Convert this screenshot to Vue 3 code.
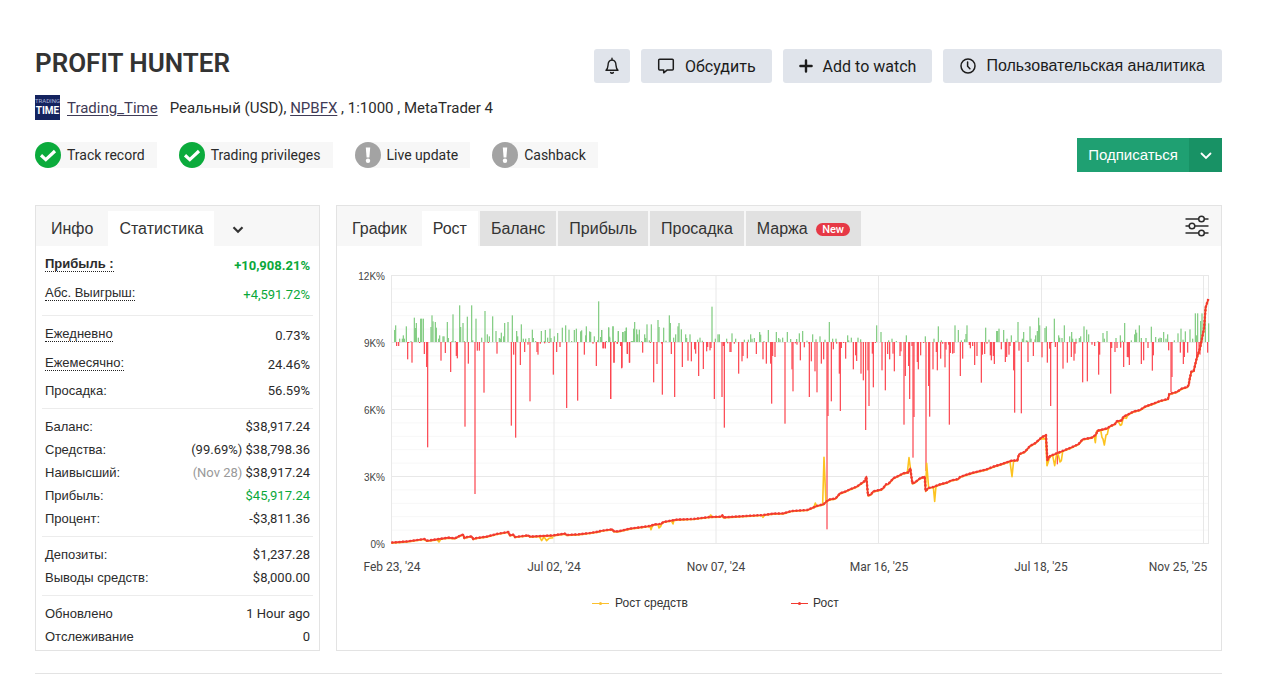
<template>
  <main class="page">
    <header class="top">
      <h1>PROFIT HUNTER</h1>
      <div class="actions">
        <button class="action square" aria-label="Notifications">
          <svg width="16" height="18" viewBox="0 0 16 18" fill="none" stroke="#1c1c1c" stroke-width="1.4" stroke-linejoin="round">
            <path d="M2 13.2h12c-1.4-1.3-1.9-2.800-2-4.800C11.900 5 10.600 3.100 8 3.100S4.100 5 4 8.400c-.1 2-.6 3.500-2 4.800z" />
            <path d="M8 3V1.300M6.600 15.500c.6.900 2.200.9 2.800 0" stroke-linecap="round" />
          </svg>
        </button>
        <button class="action">
          <svg width="18" height="18" viewBox="0 0 18 18" fill="none" stroke="#1c1c1c" stroke-width="1.5" stroke-linejoin="round">
            <path d="M2.700 2.300h12.600a1 1 0 0 1 1 1v8.800a1 1 0 0 1-1 1H10l-3.300 2.700v-2.700h-4a1 1 0 0 1-1-1V3.300a1 1 0 0 1 1-1z" />
          </svg>
          Обсудить
        </button>
        <button class="action">
          <svg width="14" height="14" viewBox="0 0 14 14" stroke="#1c1c1c" stroke-width="2.400" stroke-linecap="round">
            <path d="M7 1.400v11.200M1.400 7h11.200" />
          </svg>
          Add to watch
        </button>
        <button class="action arial">
          <svg width="16" height="16" viewBox="0 0 16 16" fill="none" stroke="#1c1c1c" stroke-width="1.500" stroke-linecap="round">
            <circle cx="8" cy="8" r="7" />
            <path d="M7.600 4v4.300l2.300 2.500" />
          </svg>
          Пользовательская аналитика
        </button>
      </div>
    </header>

    <div class="account">
      <svg class="avatar" width="25" height="25" viewBox="0 0 25 25">
        <rect width="25" height="25" fill="#14235f" />
        <text x="12.500" y="8" font-size="6" fill="#aab2d6" text-anchor="middle">TRADING</text>
        <text x="12.500" y="18.500" font-size="10" font-weight="700" fill="#fff" text-anchor="middle">TIME</text>
      </svg>
      <a href="#">Trading_Time</a>
      <span class="details">Реальный (USD), <a href="#">NPBFX</a> , 1:1000 , MetaTrader 4</span>
    </div>

    <div class="status">
      <div class="badges">
        <span v-for="badge in badges" :key="badge.text" class="badge">
          <svg width="26" height="26" viewBox="0 0 26 26">
            <circle cx="13" cy="13" r="13" :fill="badge.ok ? '#0bab3c' : '#a3a3a3'" />
            <path v-if="badge.ok" d="M6 13.300l4.800 4.300L20 9" fill="none" stroke="#fff" stroke-width="3.200" />
            <template v-else>
              <path d="M10.800 5.600h4.400l-.8 10h-2.800z" fill="#fff" />
              <circle cx="13" cy="18.800" r="2.200" fill="#fff" />
            </template>
          </svg>
          {{ badge.text }}
        </span>
      </div>
      <div class="subscribe">
        <button class="subscribe-main">Подписаться</button>
        <button class="subscribe-more" aria-label="More">
          <svg width="12" height="8" viewBox="0 0 12 8" fill="none" stroke="#fff" stroke-width="1.800" stroke-linecap="round">
            <path d="M1.500 1.500L6 6l4.500-4.500" />
          </svg>
        </button>
      </div>
    </div>

    <div class="panels">
      <section class="panel stats">
        <nav class="tabs">
          <button class="tab">Инфо</button>
          <button class="tab active">Статистика</button>
          <button class="tab more" aria-label="More">
            <svg width="12" height="8" viewBox="0 0 12 8" fill="none" stroke="#333" stroke-width="2.200">
              <path d="M1.500 1.300L6 5.700l4.500-4.400" />
            </svg>
          </button>
        </nav>
        <dl v-for="(group, i) in stats" :key="i" class="group" :class="{ hints: group[0].hint }">
          <div v-for="row in group" :key="row.label" class="row" :class="{ hint: row.hint, bold: row.bold }">
            <dt><span>{{ row.label }}</span></dt>
            <dd :class="{ green: row.green }">
              <span v-if="row.note" :class="{ muted: row.muted }">{{ row.note }}</span>
              {{ row.value }}
            </dd>
          </div>
        </dl>
      </section>

      <section class="panel growth">
        <nav class="tabs">
          <button class="tab">График</button>
          <button
            v-for="tab in chartTabs"
            :key="tab"
            class="tab"
            :class="tab === activeTab ? 'active' : 'grey'"
            @click="activeTab = tab"
          >
            {{ tab }}
            <span v-if="tab === 'Маржа'" class="new">New</span>
          </button>
          <button class="settings" aria-label="Settings">
            <svg width="24" height="22" viewBox="0 0 24 22" stroke="#2b2b2b" stroke-width="1.500" fill="#f7f7f7">
              <path d="M.5 4h23M.5 11h23M.5 18h23" />
              <circle cx="16.500" cy="4" r="2.800" />
              <circle cx="7" cy="11" r="2.800" />
              <circle cx="16.500" cy="18" r="2.800" />
            </svg>
          </button>
        </nav>

        <svg class="chart" viewBox="337 246 884 404">
          <line v-for="y in minorLines" :key="'m' + y" x1="391" x2="1209" :y1="y" :y2="y" stroke="#f7f7f7" />
          <line v-for="t in yTicks" :key="t.text" x1="391" x2="1209" :y1="t.y" :y2="t.y" stroke="#e8e8e8" />
          <line v-for="x in xLines" :key="'x' + x" :x1="x" :x2="x" y1="275" y2="544" stroke="#e8e8e8" />

          <rect v-for="(b, i) in greenBars" :key="'g' + i" :x="b.x" :y="342 - b.h" width="1.200" :height="b.h" fill="#7fcb7f" />
          <rect v-for="(b, i) in redBars" :key="'r' + i" :x="b.x" y="342" width="1.200" :height="b.h" fill="#fc444e" />

          <g fill="none" stroke-linejoin="round">
            <polyline :points="growth" stroke="#fbc02d" stroke-width="1.500" transform="translate(0 .6)" />
            <polyline v-for="(s, i) in spikes" :key="'s' + i" :points="s" stroke="#fcc320" stroke-width="1.600" />
            <polyline :points="growth" stroke="#f23a30" stroke-width="1.700" />
            <polyline :points="growth" stroke="#f23a30" stroke-width="2.400" stroke-dasharray="1.800 1.800" />
          </g>

          <g class="y-labels">
            <text v-for="t in yTicks" :key="t.text" x="385" :y="t.y + 4">{{ t.text }}</text>
          </g>
          <g class="x-labels">
            <text v-for="t in xTicks" :key="t.text" :x="t.x" y="571">{{ t.text }}</text>
          </g>
          <g class="legend">
            <path d="M592 603.500h17" stroke="#fbc02d" />
            <circle cx="600.500" cy="603.500" r="1.500" fill="#fbc02d" />
            <text x="615" y="607">Рост средств</text>
            <path d="M791 603.500h17" stroke="#f23a30" />
            <circle cx="799.500" cy="603.500" r="1.500" fill="#f23a30" />
            <text x="813" y="607">Рост</text>
          </g>
        </svg>
      </section>
    </div>
    <hr />
  </main>
</template>

<script setup>
import { ref } from 'vue'

const badges = [
  { text: 'Track record', ok: true },
  { text: 'Trading privileges', ok: true },
  { text: 'Live update', ok: false },
  { text: 'Cashback', ok: false },
]

const stats = [
  [
    { label: 'Прибыль :', value: '+10,908.21%', hint: true, bold: true, green: true },
    { label: 'Абс. Выигрыш:', value: '+4,591.72%', hint: true, green: true },
  ],
  [
    { label: 'Ежедневно', value: '0.73%', hint: true },
    { label: 'Ежемесячно:', value: '24.46%', hint: true },
    { label: 'Просадка:', value: '56.59%' },
  ],
  [
    { label: 'Баланс:', value: '$38,917.24' },
    { label: 'Средства:', value: '$38,798.36', note: '(99.69%)' },
    { label: 'Наивысший:', value: '$38,917.24', note: '(Nov 28)', muted: true },
    { label: 'Прибыль:', value: '$45,917.24', green: true },
    { label: 'Процент:', value: '-$3,811.36' },
  ],
  [
    { label: 'Депозиты:', value: '$1,237.28' },
    { label: 'Выводы средств:', value: '$8,000.00' },
  ],
  [
    { label: 'Обновлено', value: '1 Hour ago' },
    { label: 'Отслеживание', value: '0' },
  ],
]

const chartTabs = ['Рост', 'Баланс', 'Прибыль', 'Просадка', 'Маржа']
const activeTab = ref('Рост')

const yTicks = [
  { text: '12K%', y: 275.5 },
  { text: '9K%', y: 342.5 },
  { text: '6K%', y: 409.5 },
  { text: '3K%', y: 476.5 },
  { text: '0%', y: 543.5 },
]
const minorLines = Array.from({ length: 20 }, (_, i) => 275.5 + i * 13.4)
const xLines = [391.5, 554, 716, 878.5, 1041.5, 1203.5, 1208.5]
const xTicks = [
  { text: "Feb 23, '24", x: 392 },
  { text: "Jul 02, '24", x: 554 },
  { text: "Nov 07, '24", x: 716 },
  { text: "Mar 16, '25", x: 879 },
  { text: "Jul 18, '25", x: 1041 },
  { text: "Nov 25, '25", x: 1178 },
]

// data is stored in thirds of a chart unit, each block relative to its left edge
const STEP = 3

const bars = (blocks) =>
  blocks.flatMap(([left, list]) =>
    list.split(' ').map((item) => {
      const [x, h] = item.split(':').map(Number)
      return { x: left + x / STEP - 0.6, h: h / STEP }
    }),
  )

const greenBars = bars([
  [330, '194:36 197:50 209:10 217:10 220:20 223:10 229:47 243:3 253:73 256:42 259:57 265:13 272:70 275:70 280:70 303:45 306:80 309:62 316:60 319:43 326:10 329:20 339:17 342:17 352:60 355:12 366:3 369:83 376:3 389:110 392:45 399:57 403:3 412:76 425:110 428:5 438:70 455:13 465:93 472:23 478:17 488:77 498:33 508:12 511:10 514:28 521:17 524:57 534:60 547:80 560:33 563:17 574:53 580:10 587:10 597:12 607:37 610:12 617:3 634:33 643:3 646:36 653:13 660:40 663:12 673:17 683:27 697:43 707:50 717:37 725:3 733:36 739:40 752:32 755:35 767:20 769:47 779:32 782:30 793:17 803:5 806:122 815:36 829:3 836:44 839:12 849:47 856:3 865:32 879:30 886:32 889:43'],
  [600, '2:15 5:36 19:3 26:43 29:16 39:47 46:3 55:33 68:30 75:33 79:43 94:3 98:3 101:40 104:60 110:38 113:23 118:37 125:3 134:23 137:12 141:53 148:5 154:53 174:66 177:45 191:43 198:4 208:80 211:57 221:13 227:23 234:47 237:57 244:38 257:23 260:12 270:23 293:7 300:13 307:4 336:106 346:10 354:23 358:23 380:10 396:26 407:10 433:7 445:7 452:23 456:10 463:12 479:30 482:22 492:3 505:36 529:30 536:12 540:8 548:13 562:30 572:9 590:9 598:26 608:33 621:4 638:23 648:8 660:17 675:7 688:60 698:10 708:10 743:20 746:5 754:13 774:13 782:8 830:50 843:30 866:5 876:10 889:3'],
  [800, '319:20 376:17 402:10 415:47 424:5 465:50 475:36 484:5 494:8 498:24 501:50 557:43 567:7 590:33 593:33 597:40'],
  [1000, '11:36 21:10 34:20 48:4 54:60 67:10 71:30 79:5 83:4 90:47 93:10 105:8 107:20 112:33 116:73 119:50 135:42 139:47 163:70 176:20 179:13 186:12 193:50 209:17 215:30 218:10 228:10 238:12 242:17 252:47 260:37 266:23 294:3 309:27 313:10 321:33 348:12 361:20 367:4 374:57 394:5 404:23 407:37 410:28 418:50 424:12 438:12 454:46 467:15 476:10 480:13 484:12 491:30 498:10 503:23 523:5 534:26 543:40 549:7 556:32 570:38 578:10 586:86 589:20 593:86 602:63 606:86 616:105 626:56'],
])

const redBars = bars([
  [330, '200:12 206:12 233:52 236:3 246:62 269:3 283:36 290:75 293:316 333:56 346:33 362:90 379:42 382:49 405:254 415:65 435:456 442:26 448:26 462:152 475:3 501:35 544:251 551:38 557:287 571:69 584:30 594:8 600:178 621:30 624:38 631:5 644:4 657:3 670:98 680:30 690:15 710:198 743:176 763:38 789:5 799:72 819:19 826:19 842:171 852:62 862:5 873:12 876:77 892:35 899:62'],
  [600, '10:19 16:19 32:171 42:62 52:5 62:12 65:79 82:36 88:62 128:32 151:3 161:121 171:66 187:158 185:5 214:36 224:165 247:75 264:56 274:58 284:22 287:35 296:102 310:81 320:28 323:15 330:25 333:18 343:171 366:165 370:12 373:257 383:4 390:30 393:30 403:5 416:95 426:58 429:42 442:49 469:36 489:52 499:65 512:65 515:185 518:42 525:45 555:245 576:82 579:148 586:4 591:8 601:55 613:16 627:5 628:165 634:58 645:88 651:151 664:65 671:52 681:562 684:222 694:178 700:22 710:5 718:95 721:207 724:18 731:3'],
  [800, '137:50 160:82 167:40 170:57 183:95 190:115 197:264 204:85 207:192 217:35 220:136 226:3 246:85 256:145 263:36 269:52 279:35 283:88 300:42 303:28 312:248 316:102 326:72 329:171 336:12 339:347 342:225 352:60 355:82 362:40 371:3 378:387 386:132 389:224 399:82 409:30 412:85 422:50 428:5 435:76 438:23 446:8 448:248 451:33 458:35 462:33 481:102 488:50 508:9 511:19 518:12 524:69 531:42 544:122 547:38 554:36 561:5 571:40 574:55 580:42 583:66'],
  [1000, '4:22 16:60 20:45 27:38 30:12 41:85 44:212 57:26 64:214 84:60 100:42 126:46 142:62 149:20 152:192 155:3 166:15 172:367 189:80 202:62 214:45 222:56 225:35 228:5 248:121 262:118 276:8 284:12 296:98 299:38 332:155 335:18 345:30 351:18 362:17 371:75 382:45 385:46 388:69 424:66 431:55 444:18 457:86 460:40 506:25 513:150 516:105 541:32 550:66 553:45 563:32 590:42 597:35 600:38 623:32'],
])

const line = (left, top, list) =>
  list
    .split(' ')
    .map((item) => {
      const [x, y] = item.split(',').map(Number)
      return `${left + x / STEP},${top + y / STEP}`
    })
    .join(' ')

const growth = [
  line(380, 290, '34,758 83,754 133,747 140,752 150,751 170,748 205,743 225,745 240,737 250,734 253,744 262,741 275,739 280,747 290,744 320,740 350,732 385,726 390,736 400,734 405,741 430,738 445,736 450,740 520,736 555,731 560,735 595,733 630,729 660,724'),
  line(600, 290, '0,723 20,720 37,718 42,724 55,724 90,716 150,708 165,703 183,702 190,696 230,689 280,687 330,681 362,680 367,676 370,682 490,675 520,671 550,670 575,663 622,660 650,648 670,643 680,634 690,628 705,626'),
  line(800, 290, '108,624 120,610 135,605 150,598 170,590 190,576 195,572 199,560 204,616 212,614 220,604 243,599 250,594 258,583 265,582 280,565 295,558 310,550 325,547 331,535 337,580 345,577 360,565 374,560 377,603 385,594 400,591 420,583 440,578 455,571 475,567 480,561 500,554 520,548 560,538'),
  line(1000, 200, '-20,800 0,794 35,782 52,781 57,763 75,755 90,738 105,730 125,712 138,705 142,780 150,768 175,758 190,752 215,742 235,733 248,718 275,713 287,705 293,692 322,685 330,679 345,672 350,664 365,661 370,650 385,643 400,635 420,630 435,620 460,611 480,603 504,597 508,582 530,576 545,566 562,561 566,555 569,537 574,515 581,513 590,475 600,445 606,415 612,385 617,322 625,297'),
].join(' ')

const spikes = [
  line(380, 290, '172,750 177,756 182,748'),
  line(380, 290, '478,740 485,752 492,741 500,752 507,745 520,743'),
  line(600, 290, '150,708 153,719 158,706'),
  line(600, 290, '174,704 177,714 182,709 185,702'),
  line(600, 290, '215,694 219,702 222,690'),
  line(600, 290, '328,682 332,675 336,681'),
  line(600, 290, '486,676 489,682 492,677'),
  line(600, 290, '642,650 646,639 650,648'),
  line(600, 290, '668,643 672,502 678,640'),
  line(800, 290, '322,548 327,503 332,540'),
  line(800, 290, '377,590 380,520 386,594'),
  line(800, 290, '400,591 404,634 408,588'),
  line(1000, 200, '30,785 36,830 41,782'),
  line(1000, 200, '120,717 137,716 141,797 150,770 158,767 164,797 170,762 175,765 180,786 184,782 188,755'),
  line(1000, 200, '283,710 286,728 290,693 302,690 306,712 309,717 313,735 318,705 322,703 326,683'),
  line(1000, 200, '355,665 361,676 365,674 370,653 379,655 384,645'),
]
</script>

<style>
body {
  margin: 0;
  background: #fff;
}
</style>

<style scoped>
.page {
  padding: 48px 58px 0 35px;
  font-family: Roboto, 'Liberation Sans', sans-serif;
  font-size: 16px;
  color: #2b2b2b;
}

button {
  border: none;
  border-radius: 0;
  background: none;
  margin: 0;
  padding: 0;
  font: inherit;
  color: inherit;
  white-space: nowrap;
  cursor: pointer;
}

a {
  color: #3f3b56;
  text-underline-offset: 2px;
}

.top {
  display: flex;
  justify-content: space-between;
  align-items: center;
  height: 36px;
}

h1 {
  margin: 0;
  padding-bottom: 6px;
  font-size: 26px;
  line-height: 30px;
  font-weight: 600;
  color: #333;
}

.actions {
  display: flex;
  gap: 11px;
}

.action {
  display: flex;
  align-items: center;
  gap: 10px;
  height: 34px;
  padding: 0 16px;
  border-radius: 3px;
  background: #e0e4eb;
  color: #1c1c1c;
}

.square {
  padding: 0 10px;
}

.arial {
  padding: 0 17px;
  font-family: 'Liberation Sans', Arial, sans-serif;
}

.account {
  display: flex;
  align-items: center;
  margin-top: 11px;
  height: 25px;
  font-size: 15px;
}

.avatar {
  margin: 0 7px 0 0;
}

.avatar text {
  font-family: Roboto, sans-serif;
}

.details {
  margin-left: 12px;
}

.status {
  display: flex;
  justify-content: space-between;
  align-items: center;
  margin-top: 17px;
  height: 35px;
}

.badges {
  display: flex;
  gap: 22px;
}

.badge {
  display: flex;
  align-items: center;
  gap: 6px;
  height: 26px;
  padding-right: 12px;
  border-radius: 13px 0 0 13px;
  background: #f7f7f7;
  font-size: 14px;
}

.subscribe {
  display: flex;
  height: 34px;
  font-family: 'Liberation Sans', Arial, sans-serif;
  font-size: 15px;
  color: #fff;
}

.subscribe-main {
  padding: 0 11px;
  background: #1fa072;
}

.subscribe-more {
  width: 33px;
  background: #189265;
}

.panels {
  display: grid;
  grid-template-columns: 285px minmax(0, 1fr);
  gap: 16px;
  margin-top: 33px;
}

.panel {
  border: 1px solid #e3e3e3;
  font-family: 'Liberation Sans', Arial, sans-serif;
}

.tabs {
  display: flex;
  align-items: flex-end;
  height: 40px;
  background: #f7f7f7;
}

.tab {
  height: 35px;
  padding: 0 11px;
  color: #333;
}

.stats .tab:first-child,
.growth .tab:first-child {
  padding: 0 15px;
}

.tab.active {
  background: #fff;
}

.tab.more {
  padding: 0 18px;
}

.growth .grey {
  margin-left: 2px;
  background: #e1e1e1;
}

.new {
  display: inline-block;
  margin-left: 4px;
  padding: 0 6px;
  border-radius: 7px;
  background: #e63946;
  color: #fff;
  font-family: Roboto, sans-serif;
  font-size: 11px;
  line-height: 13px;
  font-weight: 500;
  vertical-align: 1px;
}

.settings {
  align-self: center;
  margin-left: auto;
  margin-right: 12px;
  height: 22px;
}

.settings svg {
  display: block;
}

.group {
  margin: 0 6px;
  padding: 6px 3px;
  border-bottom: 1px solid #ececec;
  font-size: 13px;
}

.group.hints {
  padding-top: 5px;
}

.group:last-child {
  padding-bottom: 0;
  border-bottom: none;
}

.row {
  display: flex;
  justify-content: space-between;
  align-items: center;
  height: 23px;
}

.row.hint {
  height: 29px;
}

.row.hint dt {
  padding-bottom: 5px;
}

.row.hint dt span {
  border-bottom: 1px dotted #222;
}

.row.bold {
  font-weight: 700;
}

dd {
  margin: 0;
  font-family: Roboto, sans-serif;
}

.green {
  color: #0aa83a;
}

.muted {
  color: #999;
}

.chart {
  display: block;
  width: 100%;
}

.y-labels {
  font-size: 10px;
  fill: #444;
  text-anchor: end;
}

.x-labels {
  font-family: Roboto, sans-serif;
  font-size: 12px;
  fill: #444;
  text-anchor: middle;
}

.legend {
  font-size: 12px;
  fill: #333;
}

hr {
  margin: 22px 0 0;
  border: none;
  border-top: 1px solid #e3e3e3;
}
</style>
